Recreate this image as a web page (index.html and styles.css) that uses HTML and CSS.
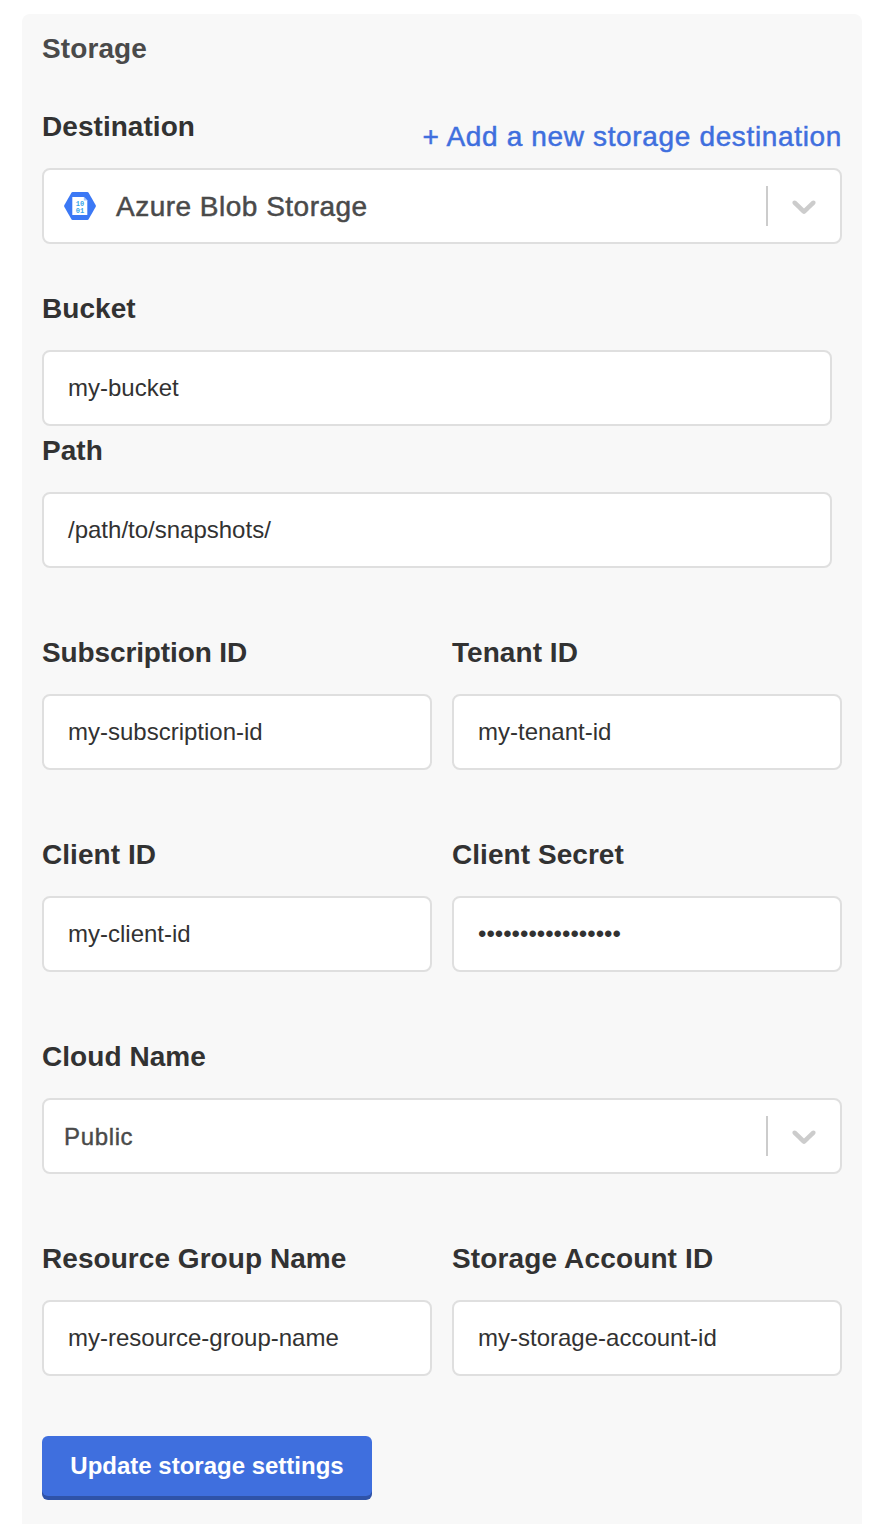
FILE: index.html
```html
<!DOCTYPE html>
<html lang="en">
<head>
<meta charset="utf-8">
<title>Storage</title>
<link rel="stylesheet" href="styles.css">
</head>
<body>
<main class="panel">
  <h1 class="title">Storage</h1>
  <div class="head">
    <span class="label">Destination</span>
    <a class="add">+ Add a new storage destination</a>
  </div>
  <div class="select">
    <svg class="azure" width="32" height="28" viewBox="0 0 32 28"><path d="M8.600 0h14.800q.8 0 1.200.7l7 12.300q.5 1 0 2l-7 12.300q-.4.7-1.200.7H8.600q-.8 0-1.200-.7L.4 15q-.5-1 0-2L7.400.7Q7.800 0 8.600 0z" fill="#3b78f5"/><path d="M8.300 5h11.500l3.500 3.500V23h-15z" fill="#fff"/><path d="M19.800 5v3.500h3.500z" fill="#a9c8fb"/><text class="bits" x="11.700" y="14">10</text><text class="bits" x="11.700" y="20.500">01</text></svg>
    <span class="value-lg">Azure Blob Storage</span>
    <span class="sep"></span>
    <svg class="chev" width="40" height="40" viewBox="0 0 20 20"><path d="M4.516 7.548c0.436-0.446 1.043-0.481 1.576 0l3.908 3.747 3.908-3.747c0.533-0.481 1.141-0.446 1.574 0 0.436 0.445 0.408 1.197 0 1.615-0.406 0.418-4.695 4.502-4.695 4.502-0.217 0.223-0.502 0.335-0.787 0.335s-0.570-0.112-0.789-0.335c0 0-4.287-4.084-4.695-4.502s-0.436-1.170 0-1.615z"/></svg>
  </div>
  <label class="field narrow bucket"><span class="label">Bucket</span><span class="input">my-bucket</span></label>
  <label class="field narrow path"><span class="label">Path</span><span class="input">/path/to/snapshots/</span></label>
  <div class="row">
    <label class="field"><span class="label tight">Subscription ID</span><span class="input">my-subscription-id</span></label>
    <label class="field"><span class="label">Tenant ID</span><span class="input">my-tenant-id</span></label>
  </div>
  <div class="row">
    <label class="field"><span class="label">Client ID</span><span class="input">my-client-id</span></label>
    <label class="field"><span class="label">Client Secret</span><span class="input secret">•••••••••••••••••</span></label>
  </div>
  <div class="row">
    <div class="field"><span class="label">Cloud Name</span>
      <div class="select">
        <span class="value-sm">Public</span>
        <span class="sep"></span>
        <svg class="chev" width="40" height="40" viewBox="0 0 20 20"><path d="M4.516 7.548c0.436-0.446 1.043-0.481 1.576 0l3.908 3.747 3.908-3.747c0.533-0.481 1.141-0.446 1.574 0 0.436 0.445 0.408 1.197 0 1.615-0.406 0.418-4.695 4.502-4.695 4.502-0.217 0.223-0.502 0.335-0.787 0.335s-0.570-0.112-0.789-0.335c0 0-4.287-4.084-4.695-4.502s-0.436-1.170 0-1.615z"/></svg>
      </div>
    </div>
  </div>
  <div class="row">
    <label class="field"><span class="label">Resource Group Name</span><span class="input">my-resource-group-name</span></label>
    <label class="field"><span class="label loose">Storage Account ID</span><span class="input">my-storage-account-id</span></label>
  </div>
  <button class="update">Update storage settings</button>
</main>
</body>
</html>
```
FILE: styles.css
```css
* { box-sizing: border-box; }
body { margin: 0; background: #fff; height: 1524px; overflow: hidden; font-family: "Liberation Sans", Arial, sans-serif; color: #323232; }
.panel { margin: 14px 14px 0 22px; height: 1510px; padding: 17px 20px 0; background: #f8f8f8; border-radius: 8px 8px 0 0; }
.title { margin: 0; font-size: 28px; line-height: 36px; letter-spacing: .1px; color: #4a4a4a; }
.head { display: flex; justify-content: space-between; margin-top: 42px; height: 59px; }
.label { display: block; font-size: 28px; line-height: 36px; font-weight: 700; letter-spacing: .05px; white-space: nowrap; }
.tight { letter-spacing: -.12px; }
.loose { letter-spacing: .14px; }
.add { margin-top: 10px; font-size: 28px; line-height: 36px; letter-spacing: .65px; color: #3f6fde; -webkit-text-stroke: .5px #3f6fde; white-space: nowrap; }
.select, .input { display: flex; align-items: center; height: 76px; background: #fff; border: 2px solid #dfdfdf; border-radius: 8px; }
.select { padding: 0 16px 0 20px; color: #4a4a4a; }
.azure { margin-right: 20px; }
.bits { font: 700 7px "Liberation Mono", monospace; fill: #35a5e8; }
.value-lg { padding-top: 2px; font-size: 28px; letter-spacing: .49px; -webkit-text-stroke: .5px #4a4a4a; }
.value-sm { padding-top: 2px; font-size: 24px; letter-spacing: .65px; -webkit-text-stroke: .4px #4a4a4a; }
.sep { width: 2px; height: 40px; margin-left: auto; background: #ccc; }
.chev { margin-left: 16px; fill: #ccc; }
.field { display: block; }
.field .label { margin-bottom: 23px; }
.input { padding: 0 24px; font-size: 24px; }
.narrow { width: 790px; }
.bucket { margin-top: 47px; }
.path { margin-top: 7px; }
.row { display: grid; grid-auto-flow: column; grid-auto-columns: 1fr; gap: 20px; margin-top: 67px; }
.update { display: block; margin-top: 60px; width: 330px; height: 60px; padding: 0; border: 0; border-radius: 6px; background: #3f6fde; box-shadow: 0 4px #2f53a8; color: #fff; font: 700 24px "Liberation Sans", Arial, sans-serif; }
```
